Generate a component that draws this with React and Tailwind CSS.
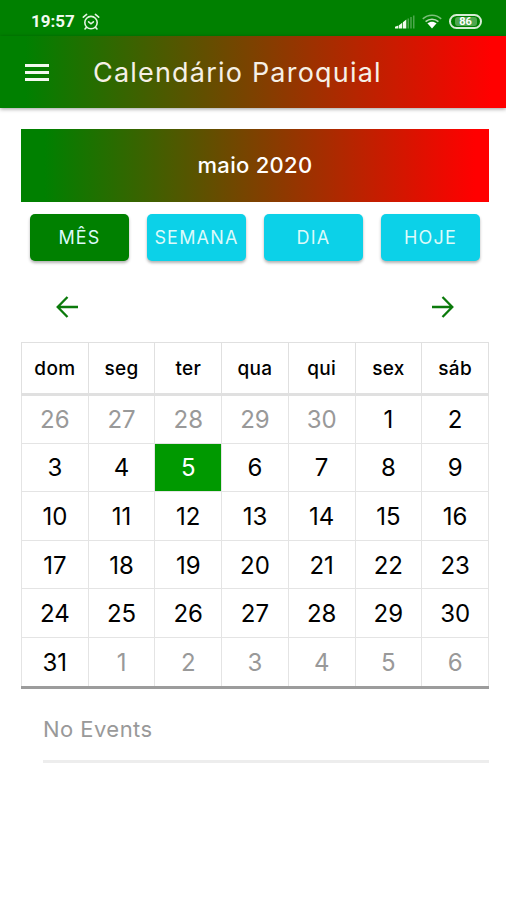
import clsx from 'clsx';

const MODES = ['MÊS', 'SEMANA', 'DIA', 'HOJE'];
const WEEKDAYS = ['dom', 'seg', 'ter', 'qua', 'qui', 'sex', 'sáb'];

// 26/04 -> 06/06
const DAYS = Array.from({ length: 42 }, (_, i) => {
  const offset = i - 4;
  if (offset < 1) return { day: offset + 30, muted: true };
  if (offset > 31) return { day: offset - 31, muted: true };
  return { day: offset, muted: false };
});

const SELECTED = 5;

function AlarmIcon() {
  return (
    <svg width="18" height="18" viewBox="0 0 18 18" fill="none" stroke="#e3f2e0" strokeWidth="1.6" strokeLinecap="round">
      <circle cx="9" cy="9.6" r="6.2" />
      <path d="M1.3 4.2 4.6 1.4M16.7 4.2l-3.3-2.8M4.4 14.4 3 16M13.6 14.4 15 16M6.6 8.8 9 10.8l2.4-2" />
    </svg>
  );
}

function SignalIcon() {
  return (
    <svg width="20" height="14" viewBox="0 0 20 14" fill="#f1faef">
      <path d="M0 13.5v-1.7l3.4-1.3v3zM4 10.2l3.2-2.4v5.7H4zM7.9 7.2l3.4-2.7v9H7.900z" />
      <path d="M12.6 3.5h1.2v10h-1.2zM15.4 2h1.2v11.5h-1.2zM18.200 .5h1.200v13h-1.200z" opacity=".4" />
    </svg>
  );
}

function WifiIcon() {
  return (
    <svg width="20" height="15" viewBox="0 0 20 15" fill="none" stroke="#e3f2e0" strokeWidth="1.6">
      <path d="M.8 4.9C6 .1 14 .1 19.2 4.9" opacity=".55" />
      <path d="M3.6 7.7c3.7-3.3 9.1-3.3 12.8 0" opacity=".8" />
      <path d="M5.4 9.3c2.8-2.2 6.4-2.2 9.2 0L10 14.5z" fill="#fff" stroke="none" />
    </svg>
  );
}

function Arrow({ flip }) {
  return (
    <svg width="22" height="22" viewBox="0 0 22 22" fill="none" stroke="#0b7a0b" strokeWidth="2.3" className={flip ? 'rotate-180' : ''}>
      <path d="M22 11H1.7M11.5 1 1.7 11l9.8 10" />
    </svg>
  );
}

export default function App() {
  return (
    <div className="h-[900px] w-full overflow-hidden bg-white font-['Inter','Open_Sans',sans-serif] text-black">
      {/* Status bar */}
      <div className="flex h-9 items-center justify-between bg-[#008000] pt-[7px] pr-[24px] pl-[31px]">
        <div className="flex items-center gap-[7px]">
          <span className="font-['Roboto',sans-serif] text-[17px] leading-none font-bold text-[#f1faef]">19:57</span>
          <AlarmIcon />
        </div>
        <div className="flex items-center gap-[7px]">
          <SignalIcon />
          <WifiIcon />
          <div className="flex h-[15px] w-[33px] items-center justify-center rounded-full border-2 border-[#d8ecd6]">
            <span className="flex h-[9px] w-[22px] items-center justify-center rounded-[3px] bg-[#4fa74f] font-['Roboto',sans-serif] text-[11px] leading-none font-bold text-white">86</span>
          </div>
        </div>
      </div>

      <header className="flex h-[72px] items-center bg-linear-to-r/srgb from-[#008000] from-5% to-[#ff0000] to-97% pl-[25px] shadow-[0_1px_4px_rgba(0,0,0,0.4)]">
        <button className="flex w-6 flex-col gap-[4px]" aria-label="Menu">
          <span className="h-[3px] bg-[#f4f9f0]" />
          <span className="h-[3px] bg-[#f4f9f0]" />
          <span className="h-[3px] bg-[#f4f9f0]" />
        </button>
        <h1 className="ml-[44px] pt-[2px] text-[27px] tracking-[1.2px] whitespace-nowrap text-[#f6f0e6]">Calendário Paroquial</h1>
      </header>

      <main className="pt-[21px] pr-[17px] pl-[21px]">
        <div className="flex h-[73px] items-center justify-center bg-linear-to-r/srgb from-[#008000] from-5% to-[#ff0000] to-97%">
          <h2 className="text-[22px] font-medium tracking-[0.3px] text-white">maio 2020</h2>
        </div>

        <div className="grid grid-cols-4 gap-[18px] px-[9px] pt-3">
          {MODES.map((mode, i) => (
            <button
              key={mode}
              className={clsx(
                'flex h-[47px] items-center justify-center rounded-[5px] pb-px text-[18px] tracking-[1.2px] text-[#dcfafa] shadow-[0_2px_3px_rgba(0,0,0,0.3)]',
                i === 0 ? 'bg-[#008000]' : 'bg-[#0cd1e8]'
              )}
            >
              {mode}
            </button>
          ))}
        </div>

        <div className="flex h-[81px] items-center justify-between pt-[11px] pr-[35px] pl-[35px]">
          <Arrow />
          <Arrow flip />
        </div>

        <table className="w-full table-fixed border-collapse border border-[#e4e4e4]">
          <thead>
            <tr className="h-[52px]">
              {WEEKDAYS.map((name) => (
                <th key={name} className="border border-b-[3px] border-[#e0e0e0] p-0 pt-[3px] text-[19px] font-medium tracking-[0.3px]">{name}</th>
              ))}
            </tr>
          </thead>
          <tbody>
            {[0, 1, 2, 3, 4, 5].map((week) => (
              <tr key={week} className="h-[48.6px] last:h-[50px] last:border-b-[3px] last:border-b-[#9c9c9c]">
                {DAYS.slice(week * 7, week * 7 + 7).map(({ day, muted }) => (
                  <td
                    key={day}
                    className={clsx(
                      'border-x border-[#e4e4e4] p-0 pt-[2px] text-center text-[24px] leading-none',
                      week < 5 && 'border-b',
                      muted && 'text-[#999999]',
                      !muted && day === SELECTED && 'bg-[#009900] text-white'
                    )}
                  >
                    {day}
                  </td>
                ))}
              </tr>
            ))}
          </tbody>
        </table>

        <div className="ml-[22px] flex h-[74px] items-center border-b-[3px] border-[#ededed] pt-[11px]">
          <p className="text-[22px] tracking-[0.45px] text-[#999999]">No Events</p>
        </div>
      </main>
    </div>
  );
}
